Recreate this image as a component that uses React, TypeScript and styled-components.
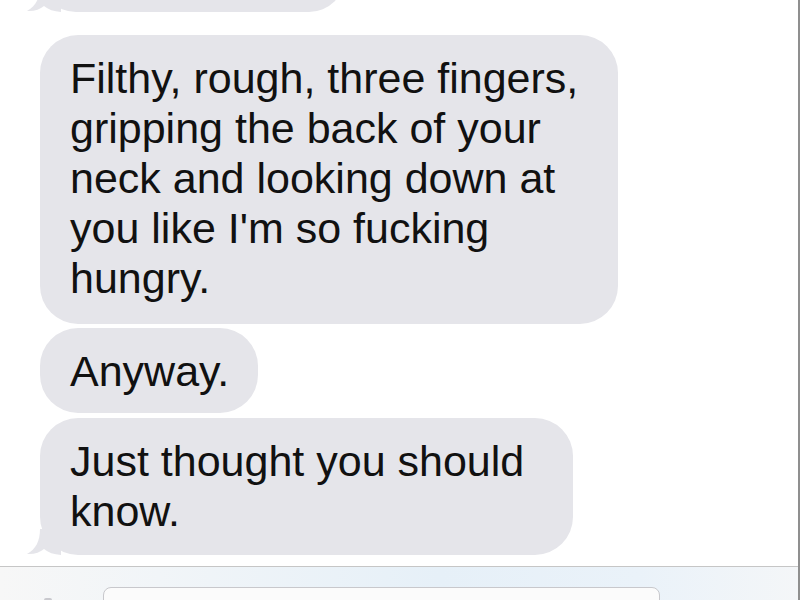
import React from "react";
import styled, { createGlobalStyle } from "styled-components";

const Global = createGlobalStyle`
  html, body { margin: 0; padding: 0; background: #ffffff; overflow: hidden; }
  * { box-sizing: border-box; }
`;

const Screen = styled.div`
  width: 800px;
  height: 600px;
  display: flex;
  flex-direction: column;
  background: #ffffff;
  border-right: 2px solid #8f8f8f;
  overflow: hidden;
  font-family: "Liberation Sans", Arial, Helvetica, sans-serif;
`;

const Thread = styled.div`
  flex: 0 0 566px;
  display: flex;
  flex-direction: column;
  align-items: flex-start;
  padding-left: 40px;
  overflow: hidden;
`;

const BubbleWrap = styled.div<{ $gap: number }>`
  position: relative;
  margin-top: ${(p) => p.$gap}px;
`;

const Bubble = styled.div<{ $height?: number; $width?: number }>`
  background: #e5e5ea;
  border-radius: 38px;
  padding: 18px 0 19px 30px;
  color: #111111;
  font-size: 43px;
  line-height: 50px;
  white-space: pre-line;
  ${(p) => (p.$height ? `height: ${p.$height}px;` : "")}
  ${(p) => (p.$width ? `width: ${p.$width}px;` : "")}
`;

const Tail = styled.svg`
  position: absolute;
  left: -15px;
  bottom: 0;
  width: 36px;
  height: 26px;
  display: block;
`;

const BottomBar = styled.div`
  flex: 1;
  border-top: 1px solid #c6c6c6;
  background: linear-gradient(90deg, #f7f7f7 0%, #f1f5f8 20%, #e6f0f8 55%, #eaf2f9 80%, #f4f6f8 100%);
  display: flex;
  align-items: flex-start;
  padding-top: 20px;
  padding-left: 37px;
`;

const CameraIcon = styled.svg`
  width: 22px;
  height: 16px;
  margin-top: 11px;
  flex: none;
  display: block;
`;

const InputField = styled.div`
  margin-left: 44px;
  width: 557px;
  height: 40px;
  background: #fbfbfb;
  border: 1px solid #c8c8cc;
  border-radius: 8px;
  flex: none;
`;

const BubbleTail = () => (
  <Tail viewBox="0 0 36 26">
    <path
      d="M15 0 C15 12 11 20 2 25 C9 25.5 15 23.5 19 20 C23 23.5 29 25.5 36 26 L36 0 Z"
      fill="#e5e5ea"
    />
  </Tail>
);

const messages = [
  {
    text: "Filthy, rough, three fingers,\ngripping the back of your\nneck and looking down at\nyou like I'm so fucking\nhungry.",
    gap: 23,
    width: 578,
    height: 289,
    tail: false,
  },
  { text: "Anyway.", gap: 4, width: 218, height: 85, tail: false },
  { text: "Just thought you should\nknow.", gap: 5, width: 533, height: 137, tail: true },
];

export default function App() {
  return (
    <>
      <Global />
      <Screen>
        <Thread>
          <BubbleWrap $gap={-60}>
            <Bubble $height={72} $width={305} />
            <BubbleTail />
          </BubbleWrap>
          {messages.map((m, i) => (
            <BubbleWrap key={i} $gap={m.gap}>
              <Bubble $width={m.width} $height={m.height}>
                {m.text}
              </Bubble>
              {m.tail && <BubbleTail />}
            </BubbleWrap>
          ))}
        </Thread>
        <BottomBar>
          <CameraIcon viewBox="0 0 22 16">
            <rect x="1" y="2" width="20" height="14" rx="3" fill="#c9c9ce" />
            <rect x="7" y="0" width="8" height="4" rx="2" fill="#c9c9ce" />
          </CameraIcon>
          <InputField />
        </BottomBar>
      </Screen>
    </>
  );
}
